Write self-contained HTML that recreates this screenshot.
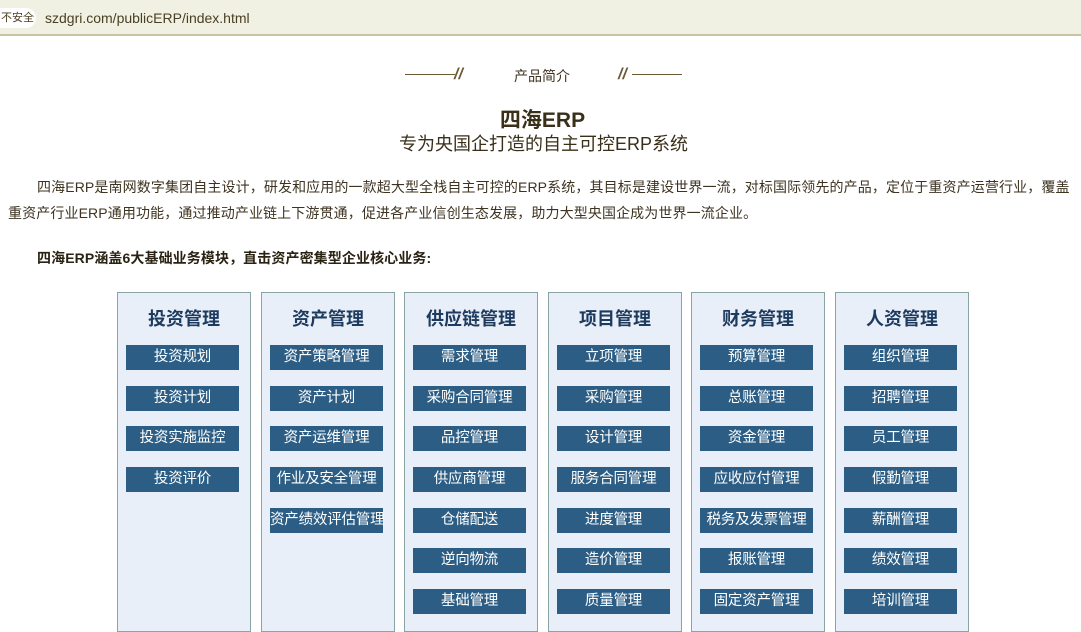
<!DOCTYPE html>
<html><head><meta charset="utf-8"><style>
*{margin:0;padding:0;box-sizing:border-box}
body{width:1081px;height:620px;overflow:hidden;background:#fff;position:relative;font-family:"Liberation Sans","Noto Sans CJK SC",sans-serif;color:#3d3320}
.bar{position:absolute;left:0;top:0;width:1081px;height:36px;background:#f0f1e2;border-bottom:2px solid #c9c3a4}
.sec{position:absolute;left:0;top:8px;height:20px;width:36px;background:#fff;border-radius:0 10px 10px 0;font-size:11px;line-height:20px;color:#4a3f22;padding-left:1px}
.url{position:absolute;left:45px;top:8px;font-size:14px;line-height:20px;color:#4a3f22}
.ab{position:absolute;white-space:nowrap}
.box{position:absolute;top:292px;width:134px;height:340px;background:#e9eff8;border:1.5px solid #8aa3a3}
.box h3{text-align:center;font-size:18px;font-weight:bold;color:#1d3b5e;margin-top:14px;height:24px;line-height:24px;margin-bottom:14px}
.btn{width:113px;height:25px;margin:0 0 15.7px 8px;background:#2c5e85;color:#fff;font-size:14.5px;line-height:25px;text-align:center;white-space:nowrap;letter-spacing:-0.2px}
</style></head><body>
<div class="bar"><div class="sec">不安全</div><div class="url">szdgri.com/publicERP/index.html</div></div>
<div class="ab" style="left:405px;top:74px;width:50px;height:1px;background:#6b5a35"></div>
<div class="ab" style="left:454px;top:66px;font-size:16px;font-weight:bold;font-style:italic;color:#6b5a35">//</div>
<div class="ab" style="left:514px;top:66px;font-size:14px;color:#3d3320">产品简介</div>
<div class="ab" style="left:618px;top:66px;font-size:16px;font-weight:bold;font-style:italic;color:#6b5a35">//</div>
<div class="ab" style="left:632px;top:74px;width:50px;height:1px;background:#6b5a35"></div>
<div class="ab" style="left:0;width:1085px;text-align:center;top:104px;font-size:21px;font-weight:bold;color:#3a2f18">四海ERP</div>
<div class="ab" style="left:0;width:1087px;text-align:center;top:130px;font-size:18px;color:#3a2f18">专为央国企打造的自主可控ERP系统</div>
<div class="ab" style="left:37px;top:177px;font-size:14px;line-height:20px;letter-spacing:0.12px">四海ERP是南网数字集团自主设计，研发和应用的一款超大型全栈自主可控的ERP系统，其目标是建设世界一流，对标国际领先的产品，定位于重资产运营行业，覆盖</div>
<div class="ab" style="left:8px;top:203px;font-size:14px;line-height:20px;letter-spacing:0.12px">重资产行业ERP通用功能，通过推动产业链上下游贯通，促进各产业信创生态发展，助力大型央国企成为世界一流企业。</div>
<div class="ab" style="left:37px;top:248px;font-size:14px;line-height:20px;font-weight:bold;color:#2a2212;letter-spacing:0.1px">四海ERP涵盖6大基础业务模块，直击资产密集型企业核心业务:</div>

<div class="box" style="left:117px"><h3>投资管理</h3><div class="btn">投资规划</div><div class="btn">投资计划</div><div class="btn">投资实施监控</div><div class="btn">投资评价</div></div>
<div class="box" style="left:261px"><h3>资产管理</h3><div class="btn">资产策略管理</div><div class="btn">资产计划</div><div class="btn">资产运维管理</div><div class="btn">作业及安全管理</div><div class="btn">资产绩效评估管理</div></div>
<div class="box" style="left:404px"><h3>供应链管理</h3><div class="btn">需求管理</div><div class="btn">采购合同管理</div><div class="btn">品控管理</div><div class="btn">供应商管理</div><div class="btn">仓储配送</div><div class="btn">逆向物流</div><div class="btn">基础管理</div></div>
<div class="box" style="left:548px"><h3>项目管理</h3><div class="btn">立项管理</div><div class="btn">采购管理</div><div class="btn">设计管理</div><div class="btn">服务合同管理</div><div class="btn">进度管理</div><div class="btn">造价管理</div><div class="btn">质量管理</div></div>
<div class="box" style="left:691px"><h3>财务管理</h3><div class="btn">预算管理</div><div class="btn">总账管理</div><div class="btn">资金管理</div><div class="btn">应收应付管理</div><div class="btn">税务及发票管理</div><div class="btn">报账管理</div><div class="btn">固定资产管理</div></div>
<div class="box" style="left:835px"><h3>人资管理</h3><div class="btn">组织管理</div><div class="btn">招聘管理</div><div class="btn">员工管理</div><div class="btn">假勤管理</div><div class="btn">薪酬管理</div><div class="btn">绩效管理</div><div class="btn">培训管理</div></div>
</body></html>
